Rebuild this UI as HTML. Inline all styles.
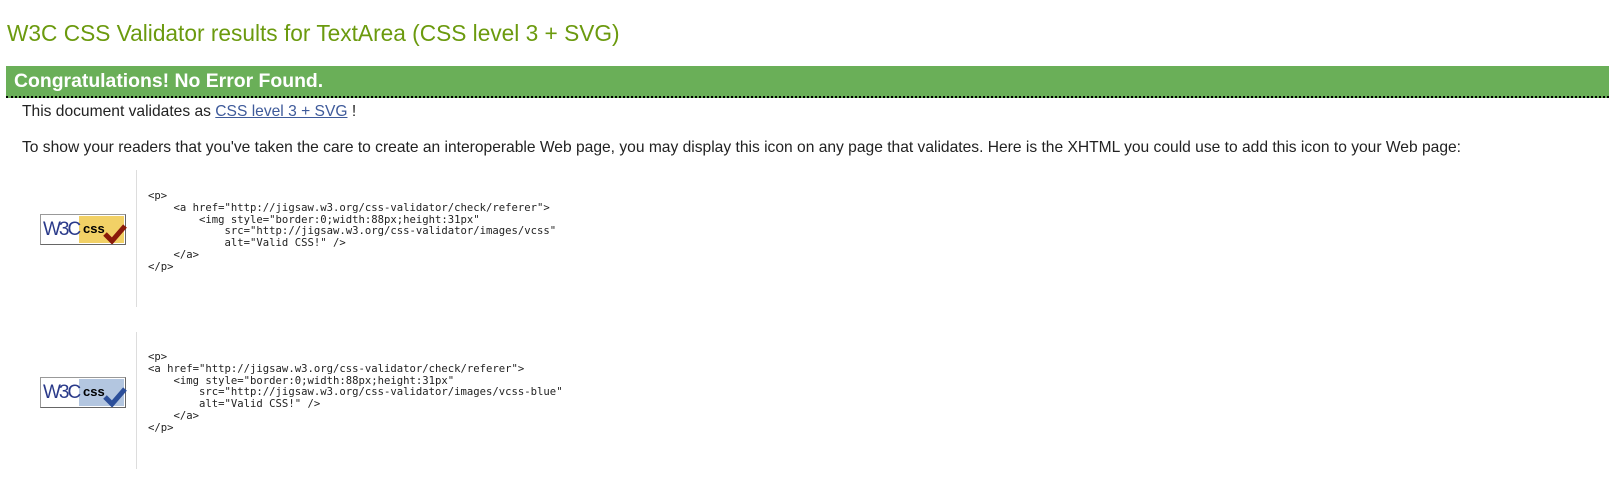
<!DOCTYPE html>
<html><head><meta charset="utf-8"><style>
body{margin:0;background:#fff;font-family:"Liberation Sans",Arial,sans-serif;color:#000;width:1609px;height:480px;overflow:hidden;position:relative}
.abs{position:absolute;white-space:nowrap}
h2{position:absolute;left:7px;top:20px;margin:0;font-weight:normal;font-size:22.7px;color:#6b9a0e;white-space:nowrap}
.bar{position:absolute;left:6px;right:0;top:66px;height:30px;background:#6aaf58;border-bottom:2px dotted #000}
.bar span{position:absolute;left:8px;top:4px;color:#fff;font-weight:bold;font-size:19.4px;white-space:nowrap}
.t{font-size:15.6px;color:#222}
a{color:#3e5a9a}
.vl{position:absolute;left:136px;width:1px;background:#ddd}
pre{position:absolute;left:148px;margin:0;font-family:"DejaVu Sans Mono","Liberation Mono",monospace;font-size:10.6px;line-height:11.8px;color:#222}
.icon{position:absolute;left:40px;width:86px;height:31px;box-sizing:border-box;border:1px solid #999;border-right-color:#666;border-bottom-color:#666;background:#fff}
.icon .w{position:absolute;left:2px;top:4px;font-family:"Liberation Sans Narrow","Liberation Sans",sans-serif;font-size:19px;color:#2a3a8a;letter-spacing:-2px}
.icon .r{position:absolute;left:38px;top:1px;right:1px;bottom:1px}
.icon .c{position:absolute;left:42px;top:6px;font-weight:bold;font-size:13px}
</style></head><body>
<h2>W3C CSS Validator results for TextArea (CSS level 3 + SVG)</h2>
<div class="bar"><span>Congratulations! No Error Found.</span></div>
<div class="abs t" style="left:22px;top:103px">This document validates as <a href="#">CSS level 3 + SVG</a> !</div>
<div class="abs t" style="left:22px;top:139px">To show your readers that you've taken the care to create an interoperable Web page, you may display this icon on any page that validates. Here is the XHTML you could use to add this icon to your Web page:</div>

<div class="icon" style="top:214px"><div class="r" style="background:#f2d166"></div><span class="w">W3C</span><span class="c">css</span>
<svg style="position:absolute;left:62px;top:9px" width="24" height="20"><path d="M2 10 L9 17 L22 2" stroke="#8a1a0a" stroke-width="5" fill="none"/></svg></div>
<div class="vl" style="top:170px;height:137px"></div>
<pre style="top:191px">&lt;p&gt;
    &lt;a href="http://jigsaw.w3.org/css-validator/check/referer"&gt;
        &lt;img style="border:0;width:88px;height:31px"
            src="http://jigsaw.w3.org/css-validator/images/vcss"
            alt="Valid CSS!" /&gt;
    &lt;/a&gt;
&lt;/p&gt;</pre>

<div class="icon" style="top:377px"><div class="r" style="background:#b3c6e0"></div><span class="w">W3C</span><span class="c">css</span>
<svg style="position:absolute;left:62px;top:9px" width="24" height="20"><path d="M2 10 L9 17 L22 2" stroke="#2c4f9a" stroke-width="5" fill="none"/></svg></div>
<div class="vl" style="top:332px;height:137px"></div>
<pre style="top:352px">&lt;p&gt;
&lt;a href="http://jigsaw.w3.org/css-validator/check/referer"&gt;
    &lt;img style="border:0;width:88px;height:31px"
        src="http://jigsaw.w3.org/css-validator/images/vcss-blue"
        alt="Valid CSS!" /&gt;
    &lt;/a&gt;
&lt;/p&gt;</pre>
</body></html>
